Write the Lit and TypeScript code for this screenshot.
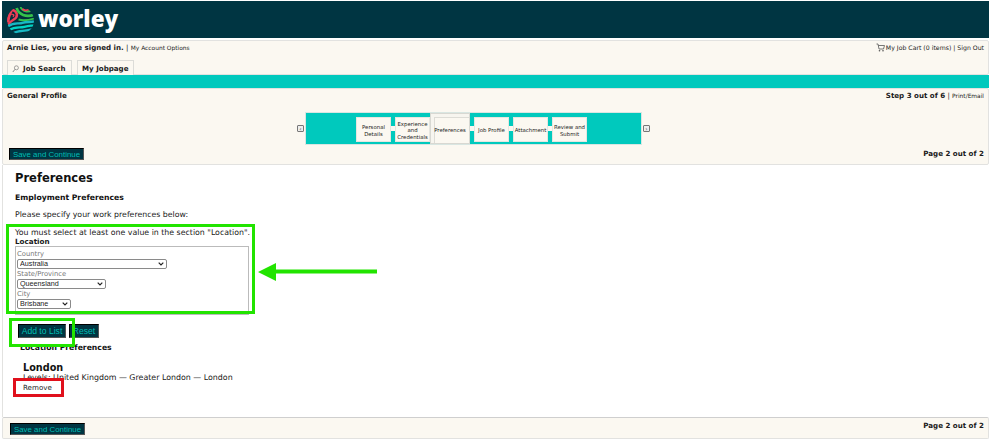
import { LitElement, html, css, svg } from "lit";
import { customElement } from "lit/decorators.js";

const steps = [
  { t: "Personal Details", w: 35 },
  { t: "Experience and Credentials", w: 35 },
  { t: "Preferences", w: 40, cur: true },
  { t: "Job Profile", w: 35 },
  { t: "Attachment", w: 35 },
  { t: "Review and Submit", w: 35 },
];

@customElement("app-root")
export class AppRoot extends LitElement {
  static styles = css`
    :host { display: block; width: 989px; height: 440px; position: relative; overflow: hidden; background: #fff;
      font-family: "DejaVu Sans", Verdana, sans-serif; color: #1a1a1a; font-size: 7.1px; }
    * { box-sizing: border-box; }
    .page { padding: 1px 0 0 2px; display: flex; flex-direction: column; height: 440px; }
    .brand { height: 37px; background: #003542; display: flex; align-items: center; padding-left: 5px; gap: 4px; flex: none; }
    .brand svg { display: block; margin-top: 1px; }
    .word { font-family: "Open Sans", sans-serif; font-weight: 800; font-size: 22.5px; line-height: 37px; color: #fff; margin-top: -3px; }
    .top { margin-top: 2px; height: 35px; background: #fbf8f1; border: 1px solid #e2e2e0; border-radius: 2px; padding: 2px 4px 0 4px; flex: none; }
    .row { display: flex; justify-content: space-between; align-items: center; }
    .b { font-weight: 700; }
    .small { font-size: 5.9px; }
    .r7 { font-size: 6.2px; display: flex; align-items: center; gap: 1px; }
    .tabs { display: flex; gap: 5px; margin-top: 8px; }
    .tab { height: 16px; background: #fbf8f1; border: 1px solid #dcdcd8; border-bottom: 0; padding: 0 4px; display: flex; align-items: center; gap: 4px; font-weight: 700; font-size: 7.1px; }
    .w1 { width: 65px; }
    .w2 { width: 57px; }
    .teal { height: 13px; background: #00c9bd; flex: none; }
    .profile { height: 77px; background: #fbf8f1; border: 1px solid #e2e2e0; border-radius: 2px; padding: 2px 4px 0 4px; flex: none; position: relative; }
    .train { display: flex; justify-content: center; align-items: center; margin-top: 12px; padding-right: 44px; gap: 1px; height: 33px; }
    .arrow { width: 7px; height: 7px; border: 1px solid #777; border-radius: 1px; background: #eee; font-size: 6px; line-height: 5px; text-align: center; color: #333; }
    .band { width: 337px; height: 33px; background: #00c9bd; border: 1px solid #d9e6e2; display: flex; align-items: flex-start; padding: 4px 0 0 50px; }
    .step { height: 25px; padding-top: 2px; background: #fbf8f1; border: 1px solid #e6e6e0; font-size: 5.4px; line-height: 6.6px; color: #222; display: flex; align-items: center; justify-content: center; text-align: center; flex: none; }
    .step.cur { height: 31px; margin-top: -4px; padding-top: 4px; border: 1px solid #d8d8d2; box-shadow: inset 3px 3px 0 0 #f7f5ef, inset 4px 4px 0 0 #dddcd6; }
    .link { width: 4px; height: 5px; margin-top: 9px; background: #fbf8f1; flex: none; }
    .actions { display: flex; justify-content: space-between; align-items: flex-start; margin-top: 3px; padding-left: 2px; }
    .btn { background: #003542; color: #00bdb3; border: 1px solid #000; border-right-color: #555; border-bottom-color: #555; font-family: "Liberation Sans", Arial, sans-serif; font-size: 7.9px; display: flex; align-items: center; justify-content: center; }
    .save { width: 75px; height: 12px; }
    .pg { margin-top: 1px; }
    .main { flex: 1; background: #fff; border-left: 1px solid #e2e2e0; padding: 6px 0 0 12px; min-height: 0; }
    h1 { margin: 0; font-size: 11.5px; line-height: 14px; font-weight: 700; color: #111; }
    h2 { margin: 7px 0 0; font-size: 7.7px; line-height: 11px; font-weight: 700; color: #111; }
    .note { font-size: 7.8px; line-height: 11px; margin-top: 6px; }
    .warn { font-size: 7.83px; line-height: 9px; margin-top: 8px; }
    .locl { font-size: 7.2px; font-weight: 700; line-height: 8px; margin-top: 1px; }
    .box { width: 234px; height: 69px; border: 1px solid #bbb; padding: 3px 0 0 1px; overflow: hidden; }
    .lab { font-size: 6.8px; line-height: 9px; color: #777; height: 9px; }
    select { display: block; appearance: none; height: 10px; border: 1px solid #8a8a8a; border-radius: 2px; background: #fff; font-family: "Liberation Sans", Arial, sans-serif; font-size: 7.2px; padding: 0 0 0 2px; color: #222; line-height: 8px; }
    .sel { position: relative; display: block; margin-bottom: 1px; }
    .sel svg { position: absolute; top: 3px; }
    .btns { display: flex; gap: 3px; margin-top: 9px; margin-left: 3px; }
    .add { width: 48px; height: 14px; font-size: 8.6px; }
    .reset { width: 30px; height: 14px; font-size: 8.6px; }
    h3 { margin: 4px 0 0 5px; font-size: 7.7px; line-height: 11px; font-weight: 700; color: #111; }
    .lon { margin: 8px 0 0 8px; font-size: 9.7px; font-weight: 700; line-height: 14px; color: #111; }
    .lev { margin: -2px 0 0 8px; font-size: 7.9px; line-height: 9px; }
    .rem { margin: 1px 0 0 8px; font-size: 7.1px; line-height: 9px; color: #222; }
    .foot { height: 22px; background: #fbf8f1; border: 1px solid #e2e2e0; border-top: 1px solid #cfcfcf; border-radius: 2px; margin-bottom: 1px; display: flex; justify-content: space-between; align-items: center; padding: 2px 4px 0 7px; flex: none; }
    .foot .b { margin-bottom: 8px; }
    .ov { position: absolute; pointer-events: none; }
    .g1 { left: 6px; top: 224px; width: 249px; height: 90px; border: 3px solid #22e400; }
    .g2 { left: 9px; top: 318px; width: 66px; height: 29px; border: 3px solid #22e400; }
    .red { left: 13px; top: 378px; width: 51px; height: 19px; border: 3px solid #e0101c; }
    .arr { left: 258px; top: 262px; }
  `;

  private logo() {
    return svg`<svg width="27" height="27" viewBox="0 0 28 28">
      <defs><clipPath id="c"><circle cx="14" cy="14" r="14"/></clipPath></defs>
      <g clip-path="url(#c)" fill="none">
        <rect width="28" height="28" fill="#04303c"/>
        <path d="M6 1C3 6 1 10 1 16" stroke="#ef3e56" stroke-width="3.2"/>
        <path d="M6 3C11 5 12 10 7 13S3 17 1 18" stroke="#ef3e56" stroke-width="2.6"/>
        <path d="M4.5 8C7 7 8 9 6 10" stroke="#ef3e56" stroke-width="1.4"/>
        <path d="M10 1C12 8 20 11 28 8" stroke="#35c24a" stroke-width="2.8"/>
        <path d="M14 0C16 5 22 6 26 3" stroke="#35c24a" stroke-width="2"/>
        <path d="M16 2C18 4 20 4 23 2.4" stroke="#ef3e56" stroke-width="1.8"/>
        <path d="M12 13C18 15 23 13.5 28 12" stroke="#35c24a" stroke-width="2"/>
        <path d="M1 20C8 15 12 18 16 16.5S24 16 28 15" stroke="#17b8c4" stroke-width="2.4"/>
        <path d="M2 24C9 19.5 13 22 18 20.5S24 19.5 28 19" stroke="#00d4c4" stroke-width="2.4"/>
        <path d="M6 27.5C12 23.5 17 26 27 23" stroke="#17b8c4" stroke-width="2.4"/>
      </g></svg>`;
  }

  private sel(label: string, w: number) {
    return html`<div class="lab">${label === "Australia" ? "Country" : label === "Queensland" ? "State/Province" : "City"}</div>
      <div class="sel" style="width:${w}px"><select style="width:${w}px"><option>${label}</option></select>
      <svg style="left:${w - 9}px" width="6" height="4" viewBox="0 0 6 4"><path d="M.7.7 3 3l2.3-2.3" fill="none" stroke="#222" stroke-width="1.2"/></svg></div>`;
  }

  render() {
    return html`<div class="page">
      <div class="brand">${this.logo()}<span class="word">worley</span></div>
      <div class="top">
        <div class="row">
          <span><span class="b">Arnie Lies, you are signed in.</span> | <span class="small">My Account Options</span></span>
          <span class="r7"><svg width="9" height="9" viewBox="0 0 9 9"><path d="M.5 1H2l1 5h4.5l1-3.5H2.4" fill="none" stroke="#555" stroke-width=".8"/><circle cx="3.5" cy="7.8" r=".8" fill="#555"/><circle cx="7" cy="7.8" r=".8" fill="#555"/></svg>My Job Cart (0 items) | Sign Out</span>
        </div>
        <div class="tabs">
          <div class="tab w1"><svg width="7" height="8" viewBox="0 0 7 8"><circle cx="4.4" cy="2.8" r="2" fill="none" stroke="#888" stroke-width=".8"/><path d="M3 4.3.8 7" stroke="#888"/></svg>Job Search</div>
          <div class="tab w2">My Jobpage</div>
        </div>
      </div>
      <div class="teal"></div>
      <div class="profile">
        <div class="row"><span class="b">General Profile</span><span><span class="b">Step 3 out of 6</span> | <span class="small">Print/Email</span></span></div>
        <div class="train">
          <div class="arrow">‹</div>
          <div class="band">
            ${steps.map((s, i) => html`${i && !s.cur ? html`<div class="link"></div>` : ""}<div class="step ${s.cur ? "cur" : ""}" style="width:${s.w}px"><span>${s.t}</span></div>`)}
          </div>
          <div class="arrow">›</div>
        </div>
        <div class="actions"><div class="btn save">Save and Continue</div><span class="b pg">Page 2 out of 2</span></div>
      </div>
      <div class="main">
        <h1>Preferences</h1>
        <h2>Employment Preferences</h2>
        <div class="note">Please specify your work preferences below:</div>
        <div class="warn">You must select at least one value in the section "Location".</div>
        <div class="locl">Location</div>
        <div class="box">
          ${this.sel("Australia", 150)}
          ${this.sel("Queensland", 89)}
          ${this.sel("Brisbane", 54)}
        </div>
        <div class="btns"><div class="btn add">Add to List</div><div class="btn reset">Reset</div></div>
        <h3>Location Preferences</h3>
        <div class="lon">London</div>
        <div class="lev">Levels: United Kingdom — Greater London — London</div>
        <div class="rem">Remove</div>
      </div>
      <div class="foot"><div class="btn save">Save and Continue</div><span class="b">Page 2 out of 2</span></div>
    </div>
    <div class="ov g1"></div>
    <div class="ov g2"></div>
    <div class="ov red"></div>
    <svg class="ov arr" width="120" height="20" viewBox="0 0 120 20"><path d="M0 10 18 1v6.5h101v4H18V19z" fill="#22e400"/></svg>`;
  }
}
